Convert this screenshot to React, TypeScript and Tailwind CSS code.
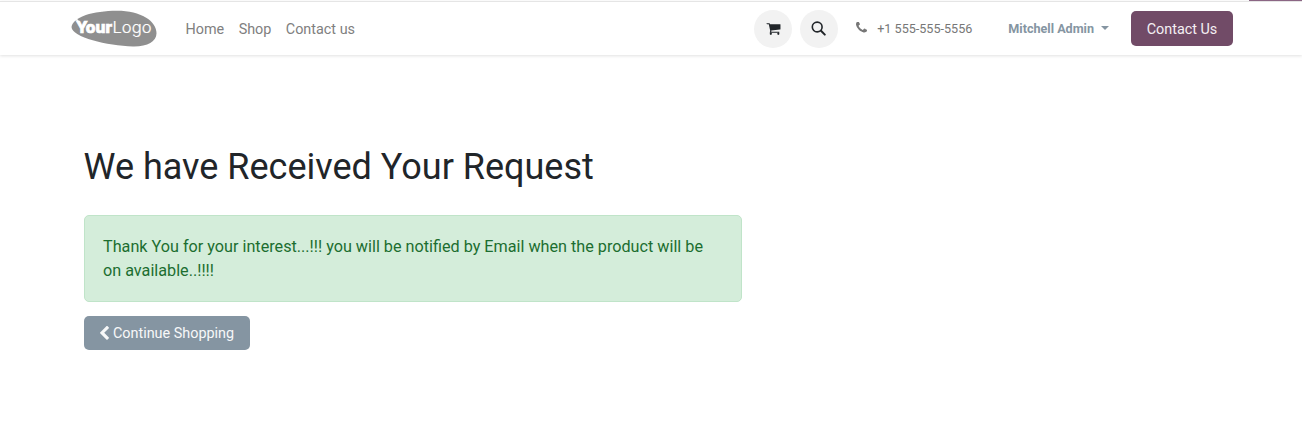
const CartIcon = () => (
  <svg viewBox="0 0 1792 1792" className="h-[15px] w-[15px]" fill="currentColor">
    <path d="M704 1536q0 52-38 90t-90 38-90-38-38-90 38-90 90-38 90 38 38 90zm896 0q0 52-38 90t-90 38-90-38-38-90 38-90 90-38 90 38 38 90zm128-1088v512q0 24-16.500 42.500t-40.500 21.500l-1044 122q13 60 13 70 0 16-24 64h920q26 0 45 19t19 45-19 45-45 19h-1024q-26 0-45-19t-19-45q0-11 8-31.500t16-36 21.500-40 15.500-29.500l-177-823h-204q-26 0-45-19t-19-45 19-45 45-19h256q16 0 28.500 6.500t19.500 15.500 13 24.500 8 26 5.500 29.500 4.500 26h1201q26 0 45 19t19 45z" />
  </svg>
);

const SearchIcon = () => (
  <svg viewBox="0 0 15 15" className="mr-px h-[15px] w-[15px]" fill="none" stroke="currentColor">
    <circle cx="6.200" cy="6" r="4.900" strokeWidth="1.600" />
    <path d="M10 9.800L13.800 13.600" strokeWidth="2" strokeLinecap="round" />
  </svg>
);

const PhoneIcon = () => (
  <svg viewBox="192 256 1408 1408" className="mb-px h-[11px] w-[11px]" fill="currentColor">
    <path transform="translate(0 64)" d="M1600 1240q0 27-10 70.500t-21 68.500q-21 50-122 106-94 51-186 51-27 0-52.500-3.500t-57.500-12.500-47.500-14.500-55.500-20.500-49-18q-98-35-175-83-128-79-264.500-215.500t-215.500-264.500q-48-77-83-175-3-9-18-49t-20.500-55.500-14.500-47.500-12.500-57.500-3.500-52.500q0-92 51-186 56-101 106-122 25-11 68.500-21t70.500-10q14 0 21 3 18 6 53 76 11 19 30 54t35 63.500 31 53.500q3 4 17.500 25t21.500 35.500 7 28.500q0 20-28.500 50t-62 55-62 53-28.500 46q0 9 5 22.500t8.500 20.500 14 24 11.500 19q76 137 174 235t235 174q2 1 19 11.500t24 14 20.500 8.500 22.500 5q18 0 46-28.500t53-62 55-62 50-28.500q14 0 28.500 7t35.500 21.500 25 17.500q25 15 53.500 31t63.500 35 54 30q70 35 76 53 3 7 3 21z" />
  </svg>
);

const ChevronLeftIcon = () => (
  <svg viewBox="410 71 1036 1558" className="mb-[2px] h-[14px] w-[9px]" fill="currentColor">
    <path d="M1427 301l-531 531 531 531q19 19 19 45t-19 45l-166 166q-19 19-45 19t-45-19l-742-742q-19-19-19-45t19-45l742-742q19-19 45-19t45 19l166 166q19 19 19 45t-19 45z" />
  </svg>
);

const Logo = () => (
  <svg viewBox="0 0 86 37" className="h-[37px] w-[86px]">
    <path
      d="M.5 17C2 7 22 .8 46 .8 70 .8 85.500 11 85.500 23.500 85.500 31.500 76 36.800 62 36.500 36 35.500 1 27.500.5 17z"
      fill="#8f8f8f"
    />
    <path d="M3.300 10.300L6 8.800l2 2.400z" fill="#fff" />
    <text x="5" y="22.800" fill="#fff" stroke="#fff" strokeWidth=".7" fontFamily="Inter, sans-serif" fontSize="15.500" fontWeight="800" textLength="36" lengthAdjust="spacingAndGlyphs">
      Your
    </text>
    <text x="41.500" y="22.800" fill="#fff" stroke="#fff" strokeWidth=".2" fontFamily="Inter, sans-serif" fontSize="16.500" fontWeight="300" textLength="39" lengthAdjust="spacingAndGlyphs">
      Logo
    </text>
  </svg>
);

export default function App() {
  return (
    <div className="h-[440px] bg-white font-['Roboto',sans-serif] text-[#212529]">
      <div className="flex h-px justify-end">
        <div className="w-[53px] bg-[#8b6684]" />
      </div>
      <header className="flex h-[54px] items-center border-t border-[#e5e5e5] pr-[69px] pl-[71px] shadow-[0_1px_3px_rgba(0,0,0,0.12)]">
        <Logo />
        <nav className="ml-[28.500px] flex gap-[14.400px] pt-[2px] text-[14.400px] leading-6 text-[#808080]">
          <a>Home</a>
          <a>Shop</a>
          <a>Contact us</a>
        </nav>
        <div className="ml-auto flex items-center">
          <div className="flex size-[38px] items-center justify-center rounded-full bg-[#f2f2f2]">
            <CartIcon />
          </div>
          <div className="ml-2 flex size-[38px] items-center justify-center rounded-full bg-[#f2f2f2]">
            <SearchIcon />
          </div>
          <div className="ml-[17.500px] flex items-center gap-[10.500px] text-[12.600px] text-[#777]">
            <PhoneIcon />
            <span className="pt-[2px]">+1 555-555-5556</span>
          </div>
          <div className="ml-9 flex items-center text-[12.600px] font-bold text-[#8595a2]">
            <span className="pt-[2px]">Mitchell Admin</span>
            <svg viewBox="0 0 8 4" className="mb-[1px] ml-[7px] h-1 w-[8px]" fill="currentColor">
              <path d="M0 0h8L4 4z" />
            </svg>
          </div>
          <button className="ml-[22px] h-[35px] w-[102px] rounded-[5px] bg-[#714b67] pt-[2px] text-[14.400px] text-[#f4eff3]">
            Contact Us
          </button>
        </div>
      </header>
      <main className="pt-[91px] pl-[84px]">
        <h1 className="text-[36px] -ml-[0.500px] leading-[43px]">We have Received Your Request</h1>
        <div className="mt-[26px] h-[86.500px] w-[658px] rounded-[5px] border border-[#c0e4c9] bg-[#d4edda] pt-[19px] pr-[19px] pl-[18px] text-[16.200px] leading-6 text-[#1c6e30]">
          Thank You for your interest...!!! you will be notified by Email when the product will be on available..!!!!
        </div>
        <button className="mt-[14.500px] flex h-[34px] w-[166px] items-center justify-center gap-1 rounded-[5px] bg-[#8595a2] pt-px text-[14.400px] text-[#f7f8f9]">
          <ChevronLeftIcon />
          Continue Shopping
        </button>
      </main>
    </div>
  );
}
